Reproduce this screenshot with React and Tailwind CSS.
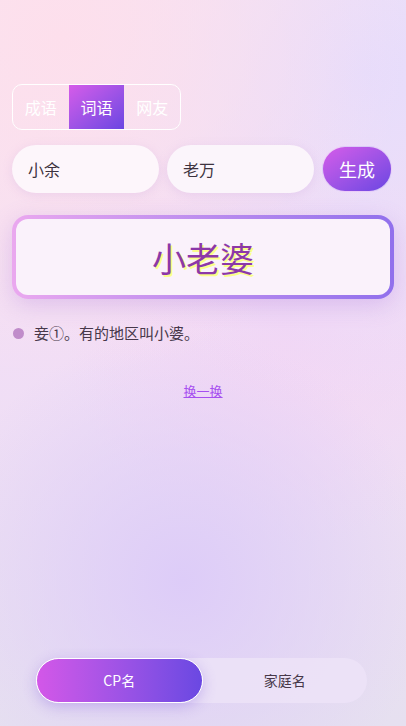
import React, { useState } from "react";

const font = { fontFamily: '"Noto Sans CJK SC", "Noto Sans", sans-serif' };

function App() {
  const [mode, setMode] = useState("词语");
  const [tab, setTab] = useState("CP名");
  const [a, setA] = useState("小余");
  const [b, setB] = useState("老万");

  return (
    <div
      style={font}
      className="min-h-[726px] w-full flex flex-col bg-[#efe3f6] bg-[radial-gradient(circle_at_15%_5%,#fddfec_0%,transparent_45%),radial-gradient(circle_at_90%_10%,#e6dcfc_0%,transparent_45%),radial-gradient(circle_at_45%_80%,#ddccf8_0%,transparent_40%),radial-gradient(circle_at_70%_45%,#f3d6f4_0%,transparent_45%),linear-gradient(180deg,#f9e6f1_0%,#f1def6_50%,#e6e0f0_100%)]"
    >
      <div className="px-3 pt-[84px]">
        {/* mode switch */}
        <div className="flex w-[169px] h-[46px] rounded-[10px] border border-white overflow-hidden">
          {["成语", "词语", "网友"].map((m) => (
            <button
              key={m}
              onClick={() => setMode(m)}
              className={`flex-1 text-[16px] text-white ${
                mode === m ? "bg-gradient-to-br from-[#d65be9] to-[#6b45e2]" : ""
              }`}
            >
              {m}
            </button>
          ))}
        </div>

        {/* inputs */}
        <div className="flex items-center gap-2 mt-[15px]">
          <input
            value={a}
            onChange={(e) => setA(e.target.value)}
            className="w-[147px] h-[48px] rounded-full bg-[#fdf6fb] px-4 text-[16px] text-[#3d3340] outline-none shadow-[0_2px_10px_rgba(200,160,220,0.25)]"
          />
          <input
            value={b}
            onChange={(e) => setB(e.target.value)}
            className="w-[147px] h-[48px] rounded-full bg-[#fbf5fb] px-4 text-[16px] text-[#3d3340] outline-none shadow-[0_2px_10px_rgba(200,160,220,0.25)]"
          />
          <button className="w-[70px] h-[46px] rounded-full border border-white/70 bg-gradient-to-br from-[#d65be9] to-[#6b45e2] text-white text-[18px]">
            生成
          </button>
        </div>

        {/* result */}
        <div className="mt-[22px] rounded-[16px] p-[4px] bg-gradient-to-r from-[#eaa8ef] to-[#9170ec] shadow-[0_6px_22px_rgba(170,120,220,0.3)]">
          <div className="h-[76px] rounded-[12px] bg-[#faf2fb] flex items-center justify-center">
            <span className="text-[34px] text-[#8c38a8] [text-shadow:2px_2px_0_#fbff8a]">小老婆</span>
          </div>
        </div>

        <div className="flex items-center gap-[10px] mt-[23px] pl-[1px]">
          <span className="w-[11px] h-[11px] rounded-full bg-[#c08cca]" />
          <span className="text-[15px] text-[#47384a]">妾①。有的地区叫小婆。</span>
        </div>

        <div className="flex justify-center mt-[36px]">
          <a href="#" className="text-[13px] text-[#a64ff0] underline">
            换一换
          </a>
        </div>
      </div>

      <div className="flex-1" />

      {/* bottom tabs */}
      <div className="flex pl-[36px] pb-[23px]">
        <div className="flex w-[331px] h-[45px] rounded-full bg-[#ece2f7]/90">
          {["CP名", "家庭名"].map((t) => (
            <button
              key={t}
              onClick={() => setTab(t)}
              className={`flex-1 rounded-full text-[14px] ${
                tab === t
                  ? "bg-gradient-to-r from-[#d357e8] to-[#6a48e2] text-white border border-white shadow-[0_4px_14px_rgba(120,80,220,0.3)]"
                  : "text-[#47384a]"
              }`}
            >
              {t}
            </button>
          ))}
        </div>
      </div>
    </div>
  );
}

export default App;
